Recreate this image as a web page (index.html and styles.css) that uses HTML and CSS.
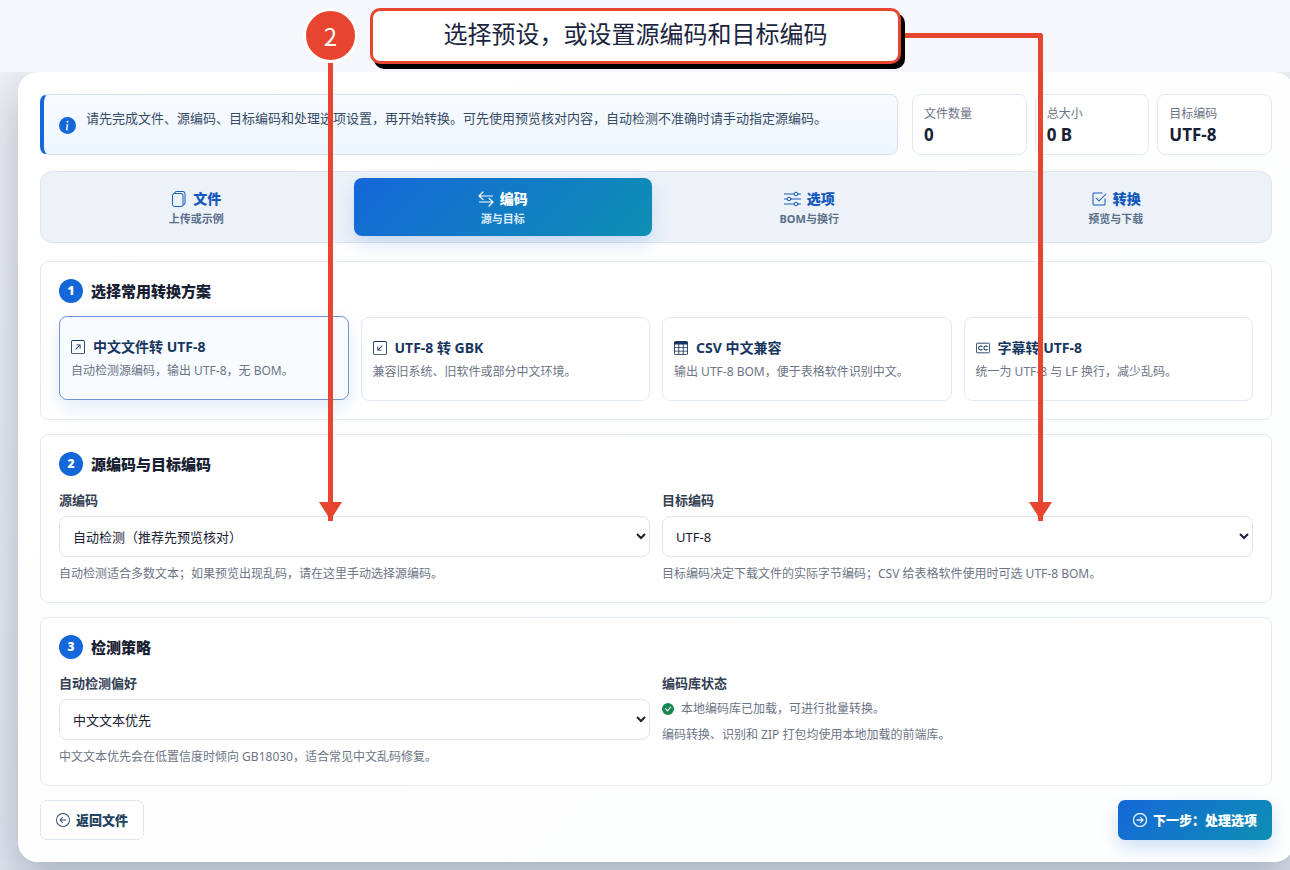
FILE: index.html
```html
<!DOCTYPE html>
<html lang="zh-CN">
<head>
  <meta charset="UTF-8">
  <title>文件编码转换</title>
  <link rel="stylesheet" href="styles.css">
</head>
<body>
  <header class="topbar"></header>

  <main class="page">
    <div class="panel">
      <div class="summary">
        <div class="notice">
          <svg class="notice-icon" width="17" height="17" viewBox="0 0 16 16" fill="currentColor" aria-hidden="true"><path d="M8 16A8 8 0 1 0 8 0a8 8 0 0 0 0 16m.93-9.412-1 4.705c-.07.34.029.533.304.533.194 0 .487-.07.686-.246l-.088.416c-.287.346-.92.598-1.465.598-.703 0-1.002-.422-.808-1.319l.738-3.468c.064-.293.006-.399-.287-.47l-.451-.081.082-.381 2.29-.287zM8 5.5a1 1 0 1 1 0-2 1 1 0 0 1 0 2"/></svg>
          <p>请先完成文件、源编码、目标编码和处理选项设置，再开始转换。可先使用预览核对内容，自动检测不准确时请手动指定源编码。</p>
        </div>
        <div class="stats">
          <div class="stat"><span>文件数量</span><strong>0</strong></div>
          <div class="stat"><span>总大小</span><strong>0 B</strong></div>
          <div class="stat"><span>目标编码</span><strong>UTF-8</strong></div>
        </div>
      </div>

      <nav class="tabs">
        <button type="button" class="tab">
          <span class="tab-title">
            <svg width="16" height="16" viewBox="0 0 16 16" fill="none" stroke="currentColor" stroke-linejoin="round" aria-hidden="true"><rect x="1.500" y="2.500" width="10.500" height="13" rx="2"/><path d="M3.500 2.500a2 2 0 0 1 2-2H12a2 2 0 0 1 2 2V12a2 2 0 0 1-2 2"/></svg>
            文件
          </span>
          <small>上传或示例</small>
        </button>
        <button type="button" class="tab active">
          <span class="tab-title">
            <svg width="16" height="16" viewBox="0 0 16 16" fill="none" stroke="currentColor" stroke-width="1.200" stroke-linecap="round" stroke-linejoin="round" aria-hidden="true"><path d="M14.500 5H1M5 1 1 5l4 3.500M1.500 11H15M11.200 7.500 15 11l-4 4"/></svg>
            编码
          </span>
          <small>源与目标</small>
        </button>
        <button type="button" class="tab">
          <span class="tab-title">
            <svg width="17" height="16" viewBox="0 0 17 16" fill="none" stroke="currentColor" stroke-linecap="round" aria-hidden="true"><circle cx="12" cy="3" r="1.800"/><circle cx="5" cy="8" r="1.800"/><circle cx="12" cy="13" r="1.800"/><path d="M.5 3h9.700M13.800 3h2.700M.5 8h2.700M6.800 8h9.700M.5 13h9.700M13.800 13h2.700"/></svg>
            选项
          </span>
          <small>BOM与换行</small>
        </button>
        <button type="button" class="tab">
          <span class="tab-title">
            <svg width="16" height="16" viewBox="0 0 16 16" fill="currentColor" aria-hidden="true"><path d="M3 14.500A1.500 1.500 0 0 1 1.500 13V3A1.500 1.500 0 0 1 3 1.500h8a.5.5 0 0 1 0 1H3a.5.5 0 0 0-.5.5v10a.5.5 0 0 0 .5.5h10a.5.5 0 0 0 .5-.5V8a.5.5 0 0 1 1 0v5a1.500 1.500 0 0 1-1.500 1.500z"/><path d="m8.354 10.354 7-7a.5.5 0 0 0-.708-.708L8 9.293 5.354 6.646a.5.5 0 1 0-.708.708l3 3a.5.5 0 0 0 .708 0"/></svg>
            转换
          </span>
          <small>预览与下载</small>
        </button>
      </nav>

      <div class="sections">
        <section class="section">
          <h2><span class="step">1</span>选择常用转换方案</h2>
          <div class="presets">
            <button type="button" class="preset selected">
              <span class="preset-title">
                <svg width="14" height="14" viewBox="0 0 16 16" fill="currentColor" aria-hidden="true"><path fill-rule="evenodd" d="M15 2a1 1 0 0 0-1-1H2a1 1 0 0 0-1 1v12a1 1 0 0 0 1 1h12a1 1 0 0 0 1-1zM0 2a2 2 0 0 1 2-2h12a2 2 0 0 1 2 2v12a2 2 0 0 1-2 2H2a2 2 0 0 1-2-2zm5.854 8.803a.5.5 0 1 1-.708-.707L9.243 6H6.475a.5.5 0 1 1 0-1h3.975a.5.5 0 0 1 .5.5v3.975a.5.5 0 1 1-1 0V6.707z"/></svg>
                中文文件转 UTF-8
              </span>
              <span class="hint">自动检测源编码，输出 UTF-8，无 BOM。</span>
            </button>
            <button type="button" class="preset">
              <span class="preset-title">
                <svg width="14" height="14" viewBox="0 0 16 16" fill="currentColor" aria-hidden="true"><path fill-rule="evenodd" d="M15 2a1 1 0 0 0-1-1H2a1 1 0 0 0-1 1v12a1 1 0 0 0 1 1h12a1 1 0 0 0 1-1zM0 2a2 2 0 0 1 2-2h12a2 2 0 0 1 2 2v12a2 2 0 0 1-2 2H2a2 2 0 0 1-2-2zm10.096 3.146a.5.5 0 1 1 .707.708L6.707 9.950h2.768a.5.5 0 1 1 0 1H5.500a.5.5 0 0 1-.5-.5V6.475a.5.5 0 1 1 1 0v2.768z"/></svg>
                UTF-8 转 GBK
              </span>
              <span class="hint">兼容旧系统、旧软件或部分中文环境。</span>
            </button>
            <button type="button" class="preset">
              <span class="preset-title">
                <svg width="14" height="14" viewBox="0 0 16 16" fill="currentColor" aria-hidden="true"><path d="M0 2a2 2 0 0 1 2-2h12a2 2 0 0 1 2 2v12a2 2 0 0 1-2 2H2a2 2 0 0 1-2-2zm15 2h-4v3h4zm0 4h-4v3h4zm0 4h-4v3h3a1 1 0 0 0 1-1zm-5 3v-3H6v3zm-5 0v-3H1v2a1 1 0 0 0 1 1zm-4-4h4V8H1zm0-4h4V4H1zm5-3v3h4V4zm4 4H6v3h4z"/></svg>
                CSV 中文兼容
              </span>
              <span class="hint">输出 UTF-8 BOM，便于表格软件识别中文。</span>
            </button>
            <button type="button" class="preset">
              <span class="preset-title">
                <svg width="14" height="14" viewBox="0 0 16 16" fill="none" stroke="currentColor" aria-hidden="true"><rect x=".5" y="2.500" width="15" height="11" rx="1"/><path stroke-width="1.200" d="M7 7C6.900 5.200 3 4.800 3 8s3.900 2.800 4 1M13 7c-.1-1.800-4-2.200-4 1s3.900 2.800 4 1"/></svg>
                字幕转 UTF-8
              </span>
              <span class="hint">统一为 UTF-8 与 LF 换行，减少乱码。</span>
            </button>
          </div>
        </section>

        <section class="section">
          <h2><span class="step">2</span>源编码与目标编码</h2>
          <div class="fields">
            <div class="field">
              <label for="source">源编码</label>
              <select id="source">
                <option>自动检测（推荐先预览核对）</option>
              </select>
              <p class="hint">自动检测适合多数文本；如果预览出现乱码，请在这里手动选择源编码。</p>
            </div>
            <div class="field">
              <label for="target">目标编码</label>
              <select id="target">
                <option>UTF-8</option>
              </select>
              <p class="hint">目标编码决定下载文件的实际字节编码；CSV 给表格软件使用时可选 UTF-8 BOM。</p>
            </div>
          </div>
        </section>

        <section class="section">
          <h2><span class="step">3</span>检测策略</h2>
          <div class="fields">
            <div class="field">
              <label for="prefer">自动检测偏好</label>
              <select id="prefer">
                <option>中文文本优先</option>
              </select>
              <p class="hint">中文文本优先会在低置信度时倾向 GB18030，适合常见中文乱码修复。</p>
            </div>
            <div class="field">
              <h3>编码库状态</h3>
              <p class="hint status">
                <svg width="12" height="12" viewBox="0 0 16 16" fill="currentColor" aria-hidden="true"><path d="M16 8A8 8 0 1 1 0 8a8 8 0 0 1 16 0m-3.970-3.030a.75.75 0 0 0-1.080.022L7.477 9.417 5.384 7.323a.75.75 0 0 0-1.060 1.060L6.970 11.030a.75.75 0 0 0 1.079-.020l3.992-4.990a.75.75 0 0 0-.010-1.050z"/></svg>
                本地编码库已加载，可进行批量转换。
              </p>
              <p class="hint">编码转换、识别和 ZIP 打包均使用本地加载的前端库。</p>
            </div>
          </div>
        </section>
      </div>

      <div class="actions">
        <button type="button" class="btn">
          <svg width="14" height="14" viewBox="0 0 16 16" fill="currentColor" aria-hidden="true"><path fill-rule="evenodd" d="M1 8a7 7 0 1 0 14 0A7 7 0 0 0 1 8m15 0A8 8 0 1 1 0 8a8 8 0 0 1 16 0m-4.500-.5a.5.5 0 0 1 0 1H5.707l2.147 2.146a.5.5 0 0 1-.708.708l-3-3a.5.5 0 0 1 0-.708l3-3a.5.5 0 1 1 .708.708L5.707 7.500z"/></svg>
          返回文件
        </button>
        <button type="button" class="btn primary">
          <svg width="14" height="14" viewBox="0 0 16 16" fill="currentColor" stroke="currentColor" stroke-width=".4" aria-hidden="true"><path fill-rule="evenodd" d="M1 8a7 7 0 1 0 14 0A7 7 0 0 0 1 8m15 0A8 8 0 1 1 0 8a8 8 0 0 1 16 0M4.500 7.500a.5.5 0 0 0 0 1h5.793l-2.147 2.146a.5.5 0 0 0 .708.708l3-3a.5.5 0 0 0 0-.708l-3-3a.5.5 0 1 0-.708.708L10.293 7.500z"/></svg>
          下一步：处理选项
        </button>
      </div>
    </div>
  </main>

  <!-- guide overlay: step number, callout and arrows to both selects -->
  <div class="guide">
    <svg class="guide-lines" width="1290" height="870" viewBox="0 0 1290 870" aria-hidden="true">
      <path class="guide-line" d="M330.500 60V521M900 35.500h140.500V521"/>
      <path class="guide-head" d="M319 502h23l-11.500 18zM1029 502h23l-11.500 18z"/>
    </svg>
    <span class="guide-step">2</span>
    <div class="guide-text">选择预设，或设置源编码和目标编码</div>
  </div>
</body>
</html>
```

FILE: styles.css
```css
* {
  box-sizing: border-box;
}
html {
  overflow: hidden;
}
body {
  margin: 0;
  min-height: 100vh;
  position: relative;
  font-family: "Noto Sans", "Noto Sans CJK SC", sans-serif;
  font-size: 13px;
  line-height: 20px;
  color: #182033;
  background: linear-gradient(180deg, #eef1f6, #e0e6ef);
}
button, select {
  font: inherit;
  color: inherit;
}
button {
  cursor: pointer;
}
h2, h3, p {
  margin: 0;
}
svg {
  flex: none;
}
.topbar {
  position: relative;
  z-index: 1;
  height: 72px;
  background: #f5f7fb;
}
.page {
  margin: 0 -4px 0 18px;
}
.panel {
  padding: 22px;
  background: linear-gradient(135deg, #fff, #fdfefe);
  border-radius: 20px;
  box-shadow: 0 18px 44px rgba(22, 34, 66, 0.28);
}

/* summary row */
.summary {
  display: grid;
  grid-template-columns: 1fr 360px;
  gap: 14px;
  margin-bottom: 16px;
}
.notice {
  display: flex;
  gap: 10px;
  padding: 13px 15px 11px;
  border: 1px solid #d5e3f3;
  border-left: 4px solid #1467d8;
  border-radius: 8px;
  background: linear-gradient(180deg, #f8fbff, #edf5ff);
  color: #344a66;
}
.notice-icon {
  align-self: center;
  color: #1467d8;
}
.stats {
  display: grid;
  grid-template-columns: repeat(3, 1fr);
  gap: 8px;
}
.stat {
  display: flex;
  flex-direction: column;
  padding: 9px 11px;
  border: 1px solid #e4eaf2;
  border-radius: 8px;
  background: #fff;
}
.stat span {
  font-size: 12px;
  color: #6c7486;
}
.stat strong {
  font-size: 17px;
  line-height: 21px;
}

/* tabs */
.tabs {
  display: grid;
  grid-template-columns: repeat(4, 1fr);
  gap: 8px;
  padding: 6px;
  margin-bottom: 18px;
  border: 1px solid #dce5ef;
  border-radius: 12px;
  background: #edf2f9;
}
.tab {
  display: flex;
  flex-direction: column;
  align-items: center;
  justify-content: center;
  height: 58px;
  padding: 4px 0 0;
  border: 0;
  border-radius: 8px;
  background: none;
  color: #1459bd;
}
.tab-title {
  display: flex;
  align-items: center;
  gap: 6px;
  font-size: 14px;
  font-weight: 800;
}
.tab small {
  font-size: 11px;
  font-weight: 700;
  color: #5a6f8b;
}
.tab.active {
  color: #fff;
  background: linear-gradient(135deg, #1467d8, #0e8fb3);
  box-shadow: 0 8px 18px rgba(20, 103, 216, 0.18);
}
.tab.active small {
  color: #dcecfb;
}

/* sections */
.sections {
  display: flex;
  flex-direction: column;
  gap: 14px;
}
.section {
  padding: 17px 18px 18px;
  border: 1px solid #e4eaf1;
  border-radius: 8px;
  background: #fff;
}
.section h2 {
  display: flex;
  align-items: center;
  gap: 8px;
  margin-bottom: 14px;
  font-size: 15px;
  font-weight: 800;
  line-height: 24px;
}
.step {
  width: 24px;
  height: 24px;
  border-radius: 50%;
  background: #1467d8;
  color: #fff;
  font-size: 12px;
  font-weight: 900;
  text-align: center;
}
.presets {
  display: grid;
  grid-template-columns: repeat(4, 1fr);
  gap: 12px;
}
.preset {
  display: flex;
  flex-direction: column;
  justify-content: center;
  gap: 4px;
  height: 84px;
  padding: 2px 11px 0;
  border: 1px solid #e4eaf2;
  border-radius: 8px;
  background: #fff;
  text-align: left;
}
.preset.selected {
  border-color: #6f93d6;
  background: #f8fbff;
  box-shadow: 0 8px 20px rgba(20, 103, 216, 0.12);
  transform: translateY(-1px);
}
.preset-title {
  display: flex;
  align-items: center;
  gap: 8px;
  font-size: 14px;
  font-weight: 700;
  color: #17365f;
}
.hint {
  font-size: 12px;
  line-height: 20px;
  color: #6c7486;
}
.fields {
  display: grid;
  grid-template-columns: 1fr 1fr;
  gap: 12px;
}
.field {
  display: flex;
  flex-direction: column;
}
.field label,
.field h3 {
  margin-bottom: 6px;
  font-size: 13px;
  font-weight: 700;
  color: #344054;
}
.field select {
  height: 41px;
  margin-bottom: 7px;
  padding: 0 9px;
  border: 1px solid #dfe4ec;
  border-radius: 8px;
  background: #fff;
}
.status {
  display: flex;
  align-items: center;
  gap: 7px;
  margin-bottom: 6px;
}
.status svg {
  color: #198754;
}

/* bottom buttons */
.actions {
  display: flex;
  justify-content: space-between;
  margin-top: 14px;
}
.btn {
  display: flex;
  align-items: center;
  gap: 6px;
  height: 40px;
  padding: 0 15px;
  border: 1px solid #dfe5ee;
  border-radius: 7px;
  background: #fff;
  color: #244363;
  font-weight: 800;
}
.btn.primary {
  border: 0;
  color: #fff;
  background: linear-gradient(135deg, #1467d8, #0e8fb3);
  box-shadow: 0 8px 18px rgba(20, 103, 216, 0.2);
}

/* guide overlay */
.guide {
  position: absolute;
  top: 0;
  left: 0;
  z-index: 2;
  pointer-events: none;
}
.guide-lines {
  display: block;
}
.guide-line {
  fill: none;
  stroke: #e7452f;
  stroke-width: 5;
  stroke-linejoin: round;
}
.guide-head {
  fill: #e7452f;
}
.guide-step {
  position: absolute;
  top: 8px;
  left: 303px;
  width: 55px;
  height: 55px;
  border: 3px solid #fff;
  border-radius: 50%;
  background: #e7452f;
  color: #fff;
  font-family: "Noto Sans CJK SC", sans-serif;
  font-size: 24px;
  line-height: 50px;
  text-align: center;
}
.guide-text {
  position: absolute;
  top: 8px;
  left: 370px;
  width: 531px;
  height: 56px;
  border: 3px solid #e7452f;
  border-radius: 10px;
  background: #fff;
  box-shadow: 4px 5px 0 #000;
  color: #1b2540;
  font-family: "Noto Sans CJK SC", sans-serif;
  font-size: 24px;
  line-height: 44px;
  text-align: center;
}
```
